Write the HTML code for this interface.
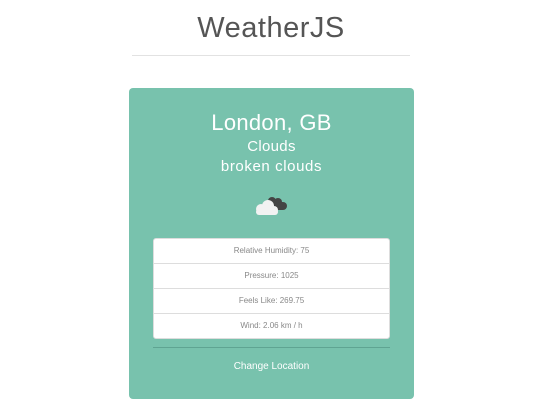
<!DOCTYPE html>
<html><head><style>
body{margin:0;width:538px;height:416px;background:#fff;font-family:"Liberation Sans",sans-serif;position:relative;overflow:hidden}
.t{position:absolute;top:12px;left:0;width:542px;text-align:center;font-size:29px;color:#555;letter-spacing:0.5px}
.line{position:absolute;top:55px;left:132px;width:278px;height:1px;background:#e2e2e2}
.card{position:absolute;left:129px;top:88px;width:285px;height:311px;background:#78c2ad;border-radius:4px;color:#fff;text-align:center}
.a{position:absolute;width:100%;left:0}
.list{position:absolute;left:24px;top:150px;width:235px;background:#fff;border:1px solid #ddd;border-radius:3px}
.list div{height:24px;line-height:24px;font-size:8px;color:#888;border-top:1px solid #ddd}
.list div:first-child{border-top:none}
.hr{position:absolute;left:24px;top:259px;width:237px;height:1px;background:#5fa492}
</style></head><body>
<div class="t">WeatherJS</div>
<div class="line"></div>
<div class="card">
<div class="a" style="top:22px;font-size:22px;letter-spacing:0.3px">London, GB</div>
<div class="a" style="top:50px;font-size:15px;letter-spacing:0.3px">Clouds</div>
<div class="a" style="top:70px;font-size:15px;letter-spacing:0.6px">broken clouds</div>
<svg style="position:absolute;left:124px;top:106px" width="36" height="24" viewBox="0 0 36 24">
<g fill="#444"><circle cx="19" cy="7" r="4"/><circle cx="25" cy="8" r="4"/><circle cx="30" cy="12" r="4"/><rect x="16" y="8" width="14" height="8"/></g>
<g fill="#f2f2f2"><circle cx="8" cy="15" r="5"/><circle cx="15" cy="12" r="6"/><circle cx="21" cy="16" r="4"/><rect x="3" y="15" width="22" height="6" rx="3"/></g>
</svg>
<div class="list"><div>Relative Humidity: 75</div><div>Pressure: 1025</div><div>Feels Like: 269.75</div><div>Wind: 2.06 km / h</div></div>
<div class="hr"></div>
<div class="a" style="top:273px;font-size:10px">Change Location</div>
</div>
</body></html>
